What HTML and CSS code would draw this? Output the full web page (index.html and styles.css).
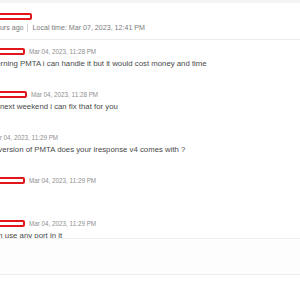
FILE: index.html
```html
<!DOCTYPE html>
<html lang="en">
<head>
    <meta charset="UTF-8" />
    <meta name="viewport" content="width=device-width, initial-scale=1.0" />
    <title>Ticket thread</title>
    <link rel="stylesheet" href="styles.css">
</head>
<body>
    <div class="topbar"></div>

    <div class="thread-head">
        <span class="name-box name-head"></span>
        <div class="meta">
            <span class="ago">hours ago</span>
            <span class="local">Local time: Mar 07, 2023, 12:41 PM</span>
        </div>
    </div>

    <div class="posts">
        <div class="post">
            <div class="post-head">
                <span class="name-box"></span>
                <span class="date">Mar 04, 2023, 11:28 PM</span>
            </div>
            <p class="msg">Concerning PMTA i can handle it but it would cost money and time</p>
        </div>
        <div class="post">
            <div class="post-head">
                <span class="name-box name-wide"></span>
                <span class="date">Mar 04, 2023, 11:28 PM</span>
            </div>
            <p class="msg">Okay, next weekend i can fix that for you</p>
        </div>
        <div class="post">
            <div class="post-head">
                <span class="name-box name-small"></span>
                <span class="date">Mar 04, 2023, 11:29 PM</span>
            </div>
            <p class="msg">What version of PMTA does your iresponse v4 comes with ?</p>
        </div>
        <div class="post">
            <div class="post-head">
                <span class="name-box"></span>
                <span class="date">Mar 04, 2023, 11:29 PM</span>
            </div>
            <p class="msg"></p>
        </div>
        <div class="post">
            <div class="post-head">
                <span class="name-box"></span>
                <span class="date">Mar 04, 2023, 11:29 PM</span>
            </div>
            <p class="msg">we can use any port in it</p>
        </div>
    </div>

    <div class="reply">
        <div class="reply-bar"></div>
    </div>
</body>
</html>
```

FILE: styles.css
```css
* {
    margin: 0;
    box-sizing: border-box;
}
body {
    background: #fff;
    font-family: "Liberation Sans", Arial, sans-serif;
    overflow: hidden;
}
.topbar {
    height: 3px;
    background: #f4f4f4;
}
.thread-head {
    padding: 10px 0 7px;
    margin-left: -22px;
    border-bottom: 1px solid #ececec;
}
.name-box {
    display: block;
    width: 47px;
    height: 7px;
    border: 2px solid #e3161c;
    border-radius: 2px;
    background: #fff;
    flex-shrink: 0;
}
.name-head {
    width: 54px;
}
.name-wide {
    width: 49px;
}
.name-small {
    width: 9px;
}
.meta {
    margin-top: 4px;
    padding-left: 14px;
    display: flex;
    align-items: center;
    font-size: 7.1px;
    line-height: 8px;
    color: #7a7a7a;
}
.ago {
    padding-right: 3px;
    border-right: 1px solid #d2d2d2;
    margin-right: 5px;
}
.posts {
    margin-left: -22px;
}
.post {
    padding: 7px 0 14px;
}
.post-head {
    display: flex;
    align-items: center;
    gap: 4px;
    height: 8px;
}
.date {
    font-size: 6.3px;
    color: #8f8f8f;
    white-space: nowrap;
}
.msg {
    margin-top: 4px;
    height: 10px;
    font-size: 7.8px;
    line-height: 10px;
    color: #4a4a4a;
    white-space: nowrap;
}
.reply {
    position: fixed;
    left: 0;
    right: 0;
    top: 238px;
    bottom: 0;
    background: #fff;
    border-top: 1px solid #eeeeee;
}
.reply-bar {
    height: 36px;
    background: #fdfdfd;
    border-bottom: 1px solid #eeeeee;
}
```
